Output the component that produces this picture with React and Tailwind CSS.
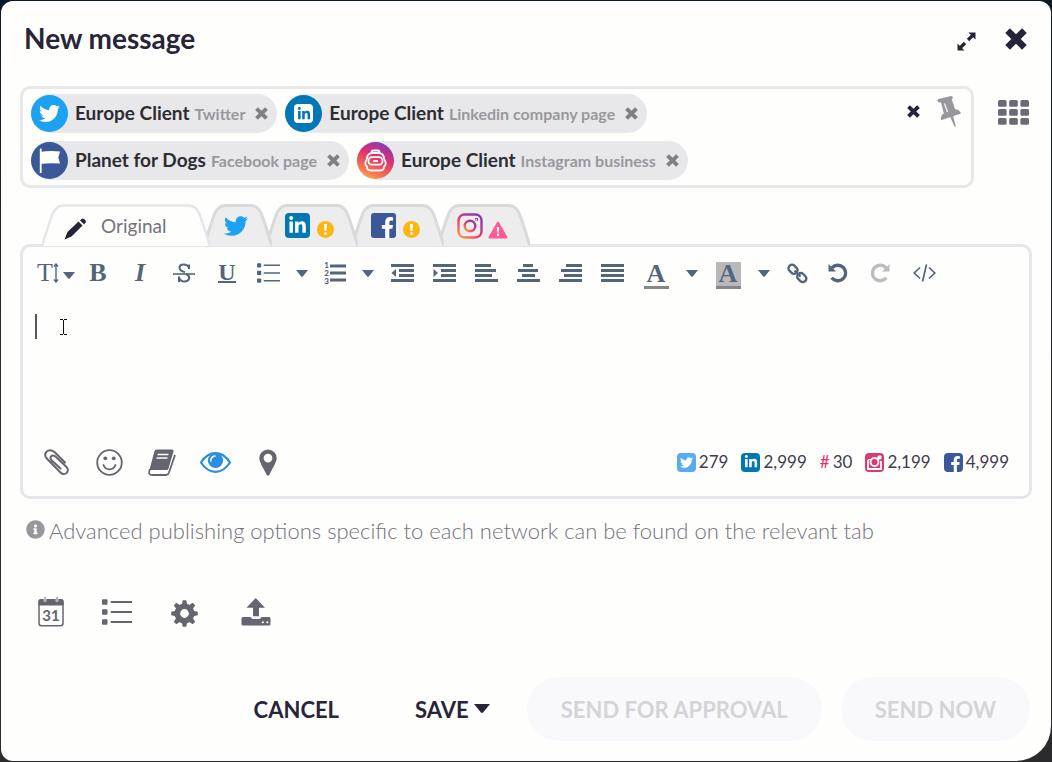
import React from 'react';
import clsx from 'clsx';
import { FaTwitter, FaLinkedinIn, FaFacebookF, FaInfoCircle } from 'react-icons/fa';

const accounts = [
  { id: 'tw', name: 'Europe Client', network: 'Twitter' },
  { id: 'li', name: 'Europe Client', network: 'Linkedin company page' },
  { id: 'fb', name: 'Planet for Dogs', network: 'Facebook page' },
  { id: 'ig', name: 'Europe Client', network: 'Instagram business' },
];

function Cross({ className }) {
  return (
    <svg viewBox="0 0 22 22" className={className} fill="none" stroke="currentColor" strokeWidth="6.6" aria-hidden="true">
      <path d="M2.6 2.6 19.4 19.4M19.4 2.6 2.6 19.4" />
    </svg>
  );
}

function CaretDown({ className }) {
  return (
    <svg viewBox="0 0 12 7" className={className} fill="currentColor" aria-hidden="true">
      <path d="M0 0H12L6.8 6.4Q6 7 5.2 6.4Z" />
    </svg>
  );
}

function AccountIcon({ id }) {
  if (id === 'tw') {
    return (
      <span className="flex size-[37px] items-center justify-center rounded-full bg-[#1da1f2] text-white">
        <FaTwitter size={21} />
      </span>
    );
  }
  if (id === 'li') {
    return (
      <span className="flex size-[37px] items-center justify-center rounded-full bg-[#0277b5]">
        <span className="flex size-[19px] items-center justify-center rounded-[4px] bg-white text-[#0277b5]">
          <FaLinkedinIn size={14} />
        </span>
      </span>
    );
  }
  if (id === 'fb') {
    return (
      <span className="flex size-[37px] items-center justify-center rounded-full bg-[#3b5998]">
        <svg viewBox="0 0 37 37" className="size-[37px]" aria-hidden="true">
          <path d="M9.7 6.5V31" stroke="#fff" strokeWidth="1.8" />
          <path d="M9 10Q18 8.500 29 9.500L27.300 15.500 29 21.500Q18 20.800 9 22Z" fill="#fff" />
        </svg>
      </span>
    );
  }
  return (
    <span className="flex size-[37px] items-center justify-center rounded-full bg-[linear-gradient(25deg,#fdb04e_5%,#f5704f_28%,#e0306e_58%,#8a3ab9_88%)]">
      <svg viewBox="0 0 37 37" className="size-[37px]" fill="none" stroke="#fff" strokeWidth="1.8" aria-hidden="true">
        <path d="M14.500 10.500Q14.500 8.500 16.500 8.500H20.500Q22.500 8.500 22.500 10.500" />
        <path d="M10 17Q10 11 16 11H21Q27 11 27 17" />
        <path d="M10 17C7.500 20 8 23.500 10 24.500V25Q10 28.500 14 28.500H23Q27 28.500 27 25V24.500C29 23.500 29.500 20 27 17" />
        <rect x="11.500" y="15.200" width="14" height="7.500" rx="3.500" />
        <path d="M16 19H21" />
      </svg>
    </span>
  );
}

function Chip({ account }) {
  return (
    <li className="flex h-[39px] items-center rounded-full bg-[#e8e8eb] pr-[9px]">
      <AccountIcon id={account.id} />
      <span className="ml-[7px] text-[19px] font-bold text-[#2d2d31]">{account.name}</span>
      <span className="ml-[5px] text-[16px] font-bold text-[#98989c]">{account.network}</span>
      <button type="button" aria-label={`Remove ${account.network}`} className="ml-[10px] text-[#808084]">
        <Cross className="size-[13px]" />
      </button>
    </li>
  );
}

function InstagramOutline() {
  return (
    <svg viewBox="0 0 26 26" className="size-[26px]" fill="none" stroke="url(#ig)" strokeWidth="2.4" aria-hidden="true">
      <defs>
        <linearGradient id="ig" x1="0" y1="1" x2="0.8" y2="0">
          <stop offset="0" stopColor="#fda34b" />
          <stop offset="0.5" stopColor="#e6356c" />
          <stop offset="1" stopColor="#8a3ab9" />
        </linearGradient>
      </defs>
      <rect x="1.500" y="1.500" width="23" height="23" rx="6" />
      <circle cx="13" cy="13" r="5.300" />
      <circle cx="19.500" cy="6.500" r="0.600" />
    </svg>
  );
}

function WarnDot() {
  return (
    <svg viewBox="0 0 17 17" className="size-[17px]" aria-hidden="true">
      <circle cx="8.500" cy="8.500" r="8.500" fill="#fdb515" />
      <path d="M7 3H10L9.500 10H7.500ZM7.300 11.300H9.700V13.700H7.300Z" fill="#fff" />
    </svg>
  );
}

function WarnTriangle() {
  return (
    <svg viewBox="0 0 20 18" className="h-[18px] w-[20px]" aria-hidden="true">
      <path d="M10 1.500 18.500 16.500H1.500Z" fill="#ff5a98" stroke="#ff5a98" strokeWidth="2" strokeLinejoin="round" />
      <path d="M8.800 6H11.200L10.800 11.500H9.200ZM9 12.800H11V15H9Z" fill="#fff" />
    </svg>
  );
}

function Tab({ width, label, active, className, children }) {
  const side = width - 21;
  const d = `M0 42L9 14Q13 1.500 21 1.500H${side}Q${side + 8} 1.500 ${width - 9} 14L${width} 42`;
  return (
    <button
      type="button"
      role="tab"
      aria-selected={!!active}
      aria-label={label}
      className={clsx('relative flex h-[43px] items-center', className)}
    >
      <svg
        viewBox={`0 0 ${width} 43`}
        className="absolute inset-0 size-full"
        preserveAspectRatio="none"
        fill={active ? '#fefefd' : '#ededee'}
        stroke={active ? '#e6e6ea' : '#dadadd'}
        strokeWidth={active ? 2.4 : 3}
        aria-hidden="true"
      >
        <path d={d} />
      </svg>
      <span className="relative flex items-end">{children}</span>
    </button>
  );
}

function Lines({ rows }) {
  return (
    <svg viewBox="0 0 23 18" className="h-[18px] w-[23px]" stroke="currentColor" strokeWidth="3" aria-hidden="true">
      {rows.map(([a, b], i) => (
        <path key={i} d={`M${a} ${1.5 + i * 5}H${b}`} />
      ))}
    </svg>
  );
}

function Tool({ label, className, disabled, children }) {
  return (
    <button
      type="button"
      aria-label={label}
      disabled={disabled}
      className={clsx('flex h-[30px] shrink-0 items-center justify-center', className)}
    >
      {children}
    </button>
  );
}

function BulletList({ className }) {
  return (
    <svg viewBox="0 0 30 26" className={className} stroke="currentColor" fill="currentColor" aria-hidden="true">
      <path d="M9.500 3H29.500M9.500 13H29.500M9.500 23H29.500" strokeWidth="2" strokeLinecap="round" />
      <g stroke="none">
        <rect width="5.500" height="5.500" y="0.200" rx="1" />
        <rect width="5.500" height="5.500" y="10.200" rx="1" />
        <rect width="5.500" height="5.500" y="20.200" rx="1" />
      </g>
    </svg>
  );
}

function RotateArrow({ className }) {
  return (
    <svg viewBox="0 0 20 20" className={className} aria-hidden="true">
      <path d="M4 4.800A7.800 7.800 0 1 1 3.700 14.800" fill="none" stroke="currentColor" strokeWidth="3.400" />
      <path d="M0.500 1V8.500H8Z" fill="currentColor" />
    </svg>
  );
}

function Toolbar() {
  return (
    <div role="toolbar" aria-label="Formatting" className="flex items-center pt-[11px] pl-3 font-['Liberation_Serif',serif] text-[26px] leading-[26px] font-bold text-[#53657a]">
      <Tool label="Font size" className="w-[42px]">
        <span className="font-normal">T</span>
        <svg viewBox="0 0 6 20" className="h-[20px] w-[6px]" fill="none" stroke="currentColor" strokeWidth="1.400" aria-hidden="true">
          <path d="M3 1V19M1 3.500 3 1 5 3.500M1 16.500 3 19 5 16.500" />
        </svg>
        <CaretDown className="mt-1 ml-1 w-[12px]" />
      </Tool>
      <Tool label="Bold" className="w-[42px]">B</Tool>
      <Tool label="Italic" className="w-[42px]"><i>I</i></Tool>
      <Tool label="Strikethrough" className="w-[46px]">
        <svg viewBox="0 0 22 20" className="h-[20px] w-[22px]" fill="none" stroke="currentColor" aria-hidden="true">
          <path d="M16 6V1.500M16 4.500C14 0.500 6.500 0.500 6.500 4.800 6.500 8 10 8.500 12 9.200M13 11C19 14 15.500 18.500 11.500 18.500 9 18.500 7 17 6.300 15M6 13.500V19" strokeWidth="2" />
          <path d="M0 11H22" strokeWidth="1.600" />
        </svg>
      </Tool>
      <Tool label="Underline" className="w-[40px]">
        <span className="h-[20px] border-b-2 border-current text-[24px] leading-[18px]">U</span>
      </Tool>
      <Tool label="Bullet list" className="w-[42px]"><BulletList className="h-[20px] w-[23px]" /></Tool>
      <Tool label="Bullet list styles" className="w-[26px]"><CaretDown className="w-[12px]" /></Tool>
      <Tool label="Numbered list" className="w-[40px]">
        <span className="flex flex-col font-['Lato',sans-serif] text-[8px] leading-[8px] font-black">
          <span>1</span>
          <span>2</span>
          <span>3</span>
        </span>
        <svg viewBox="0 0 17 18" className="h-[18px] w-[17px]" stroke="currentColor" strokeWidth="3" aria-hidden="true">
          <path d="M1 2H17M1 9H17M1 16H17" />
        </svg>
      </Tool>
      <Tool label="Numbered list styles" className="w-[26px]"><CaretDown className="w-[12px]" /></Tool>
      {['Outdent', 'Indent'].map((label) => (
        <Tool key={label} label={label} className="w-[42px]">
          <svg viewBox="0 0 23 18" className="h-[18px] w-[23px]" stroke="currentColor" strokeWidth="3" aria-hidden="true">
            <path d="M0 1.500H23M8 6.500H23M8 11.500H23M0 16.500H23" />
            <path d={label === 'Outdent' ? 'M5 5V13L0.500 9Z' : 'M0.500 5V13L5 9Z'} fill="currentColor" stroke="none" />
          </svg>
        </Tool>
      ))}
      <Tool label="Align left" className="w-[42px]"><Lines rows={[[0, 16], [0, 21], [0, 17], [0, 23]]} /></Tool>
      <Tool label="Align center" className="w-[42px]"><Lines rows={[[6, 16], [1, 21], [5, 18], [0, 23]]} /></Tool>
      <Tool label="Align right" className="w-[42px]"><Lines rows={[[7, 23], [2, 23], [5, 23], [0, 23]]} /></Tool>
      <Tool label="Justify" className="w-[42px]"><Lines rows={[[0, 23], [0, 23], [0, 23], [0, 23]]} /></Tool>
      <Tool label="Text colour" className="w-[46px]">
        <span className="mt-1 w-[25px] border-b-[3px] border-[#85858f] leading-[24px]">A</span>
      </Tool>
      <Tool label="Text colours" className="w-[26px]"><CaretDown className="w-[12px]" /></Tool>
      <Tool label="Highlight" className="w-[46px]">
        <span className="mt-1 w-[25px] border-b-[3px] border-[#85858f] bg-[#b9b9bc] leading-[24px]">A</span>
      </Tool>
      <Tool label="Highlight colours" className="w-[26px]"><CaretDown className="w-[12px]" /></Tool>
      <Tool label="Insert link" className="w-[40px]">
        <svg viewBox="0 0 21 21" className="size-[21px]" fill="none" stroke="currentColor" strokeWidth="2.400" aria-hidden="true">
          <rect x="-4.800" y="-3.500" width="9.600" height="7" rx="3.200" transform="translate(6 6.200) rotate(45)" />
          <rect x="-4.800" y="-3.500" width="9.600" height="7" rx="3.200" transform="translate(14.800 14.600) rotate(45)" />
          <path d="M7.500 7.500 13.500 13.500" />
        </svg>
      </Tool>
      <Tool label="Undo" className="w-[42px]"><RotateArrow className="size-[20px]" /></Tool>
      <Tool label="Redo" disabled className="w-[42px] text-[#bcbcc0]"><RotateArrow className="size-[20px] -scale-x-100" /></Tool>
      <Tool label="Source code" className="w-[46px]">
        <svg viewBox="0 0 23 18" className="h-[18px] w-[23px]" fill="none" stroke="currentColor" strokeWidth="1.700" aria-hidden="true">
          <path d="M7 3.500 1.200 9 7 14.500M16 3.500 21.800 9 16 14.500M13.500 0.500 9.500 17.500" />
        </svg>
      </Tool>
    </div>
  );
}

function CountBadge({ className, children }) {
  return <span className={clsx('flex size-[19px] justify-center rounded-[4px] text-white', className)}>{children}</span>;
}

function Counters() {
  return (
    <ul className="flex items-center gap-[13px] text-[17px] text-[#3f3d4c]">
      <li className="flex items-center gap-[3px]">
        <CountBadge className="items-center bg-[#55acee]"><FaTwitter size={13} /></CountBadge>279
      </li>
      <li className="flex items-center gap-[3px]">
        <CountBadge className="items-center bg-[#0277b5]"><FaLinkedinIn size={14} /></CountBadge>2,999
      </li>
      <li className="flex items-center gap-[3px]"><span className="text-[#e0336a]">#</span>30</li>
      <li className="flex items-center gap-[3px]">
        <CountBadge className="items-center bg-[#dc3a6c]">
          <svg viewBox="0 0 19 19" className="size-[19px]" fill="none" stroke="#fff" strokeWidth="1.800" aria-hidden="true">
            <path d="M3 7V16H16V8" />
            <circle cx="9.500" cy="9" r="4" />
            <path d="M3 6.500H6.500M13 3H16V6H13Z" strokeWidth="1" fill="#fff" />
          </svg>
        </CountBadge>
        2,199
      </li>
      <li className="flex items-center gap-[3px]">
        <CountBadge className="items-end bg-[#3b5998] pl-1"><FaFacebookF size={16} /></CountBadge>4,999
      </li>
    </ul>
  );
}

function AttachBar() {
  return (
    <div className="flex flex-wrap items-center justify-between pr-[20px] pb-[18px] pl-[21px]">
      <div className="flex h-[32px] items-center text-[#65656f]">
        <button type="button" aria-label="Attach file" className="w-[52px]">
          <svg viewBox="0 0 25 27" className="h-[27px] w-[25px]" fill="none" stroke="currentColor" strokeWidth="2" strokeLinecap="round" aria-hidden="true">
            <path d="M21 13.500 10.500 3C4.500-1.500-1.500 4 2.800 9.500L16.500 23.500C21 28 26.500 22 22.300 17.800L11.500 7.500C8 5 5 8 7.500 11.200L16.500 19.500" />
          </svg>
        </button>
        <button type="button" aria-label="Emoji" className="w-[52px]">
          <svg viewBox="0 0 27 27" className="size-[27px]" fill="none" stroke="currentColor" strokeWidth="1.800" aria-hidden="true">
            <circle cx="13.500" cy="13.500" r="12.300" />
            <path d="M7.500 16Q9 20.300 13.500 20.300T19.500 16" strokeLinecap="round" />
            <circle cx="9.300" cy="9.300" r="1.900" fill="currentColor" stroke="none" />
            <circle cx="17.700" cy="9.300" r="1.900" fill="currentColor" stroke="none" />
          </svg>
        </button>
        <button type="button" aria-label="Library" className="w-[52px]">
          <svg viewBox="0 0 28 27" className="h-[27px] w-[28px]" aria-hidden="true">
            <path d="M8.500 0.500H24Q26 0.500 25.500 2.500L20.500 19.500Q20 21 18.500 21H2.500Q1.500 21 1.800 19.500L6.500 2Q7 0.500 8.500 0.500Z" fill="currentColor" />
            <path d="M9.500 5.500H20.500M8.500 9H19.500" stroke="#fefefd" strokeWidth="1.600" />
            <path d="M2 20Q-0.500 26 4 26H18Q20 26 21 23.500L27 6" fill="none" stroke="currentColor" strokeWidth="1.800" />
          </svg>
        </button>
        <button type="button" aria-label="Preview" className="w-[59px] text-[#2a8ee0]">
          <svg viewBox="0 0 31 21" className="h-[21px] w-[31px]" fill="none" aria-hidden="true">
            <path d="M1 10.500Q7 1.200 15.500 1.200T30 10.500Q24 19.800 15.500 19.800T1 10.500Z" stroke="currentColor" strokeWidth="2.200" />
            <circle cx="15.500" cy="8.500" r="7.600" fill="currentColor" />
            <path d="M10.800 9Q10.800 4.500 15 4" stroke="#fff" strokeWidth="1.500" strokeLinecap="round" />
          </svg>
        </button>
        <button type="button" aria-label="Location">
          <svg viewBox="0 0 18 27" className="h-[27px] w-[18px]" fill="currentColor" fillRule="evenodd" aria-hidden="true">
            <path d="M9 0.500A8.700 8.700 0 0 1 17.700 9.200C17.700 13 12.500 21 10.500 25.500Q9 28 7.500 25.500C5.500 21 0.300 13 0.300 9.200A8.700 8.700 0 0 1 9 0.500ZM9 4.700A4.400 4.400 0 1 0 9 13.500 4.400 4.400 0 1 0 9 4.700Z" />
          </svg>
        </button>
      </div>
      <Counters />
    </div>
  );
}

function OptionsBar() {
  return (
    <div className="mt-[52px] flex items-center pl-[18px] text-[#65656f]">
      <button type="button" aria-label="Schedule" className="w-[64px]">
        <svg viewBox="0 0 26 30" className="h-[30px] w-[26px]" aria-hidden="true">
          <rect x="1" y="3" width="24" height="25.800" rx="2.500" fill="none" stroke="currentColor" strokeWidth="1.500" />
          <path d="M0.500 8.500V4Q0.500 2 2.500 2H23.500Q25.500 2 25.500 4V8.500Z" fill="currentColor" />
          <path d="M7 0V4.500M19 0V4.500" stroke="#fefefd" strokeWidth="2.600" />
          <path d="M7 0V4M19 0V4" stroke="currentColor" strokeWidth="1" />
          <text x="13" y="23.500" textAnchor="middle" fill="currentColor" fontFamily="Lato, sans-serif" fontWeight="700" fontSize="15">31</text>
        </svg>
      </button>
      <button type="button" aria-label="Lists" className="w-[69px]"><BulletList className="h-[26px] w-[30px]" /></button>
      <button type="button" aria-label="Settings" className="w-[70px]">
        <svg viewBox="0 0 27 27" className="mt-[2px] size-[27px]" aria-hidden="true">
          <circle cx="13.500" cy="13.500" r="7.200" fill="none" stroke="currentColor" strokeWidth="5.600" />
          {[0, 45, 90, 135].map((deg) => (
            <path key={deg} d="M10.800 5 11.700 0.200H15.300L16.200 5ZM10.800 22 11.700 26.800H15.300L16.200 22Z" fill="currentColor" transform={`rotate(${deg} 13.500 13.500)`} />
          ))}
        </svg>
      </button>
      <button type="button" aria-label="Upload">
        <svg viewBox="0 0 30 28" className="h-[28px] w-[30px]" fill="currentColor" aria-hidden="true">
          <path d="M14.700 0 24 9.800H18V18.300H12V9.800H5.500Z" />
          <path d="M2 19H9.500Q10.500 21 12 21H18Q19.500 21 20.500 19H28Q29.500 19 29.500 20.500V26Q29.500 27.500 28 27.500H2Q0.500 27.500 0.500 26V20.500Q0.500 19 2 19Z" />
          <circle cx="21.800" cy="24.300" r="1.100" fill="#fefefd" />
          <circle cx="26.300" cy="24.300" r="1.100" fill="#fefefd" />
        </svg>
      </button>
    </div>
  );
}

export default function App() {
  return (
    <div className="flex min-h-screen bg-linear-to-b from-[#0c1a26] to-[#2b2b2e] to-50% p-px font-['Lato',sans-serif]">
      <main className="flex flex-1 flex-col rounded-[12px] rounded-br-[35px] bg-[#fefefd] px-[19px] pb-5">
        <header className="flex h-[85px] items-start justify-between pt-[21px] pr-[5px] pl-1 text-[#25233a]">
          <h1 className="text-[28px] leading-[32px] font-bold text-[#272536]">New message</h1>
          <div className="flex h-[34px] items-center gap-[29px]">
            <button type="button" aria-label="Expand" className="mt-1">
              <svg viewBox="0 0 19 19" className="size-[19px]" fill="currentColor" aria-hidden="true">
                <path d="M11.500 0.500H18.500V7.500ZM0.500 11.500V18.500H7.500Z" />
                <path d="M16 3 11 8M8 11 3 16" stroke="currentColor" strokeWidth="3.200" />
              </svg>
            </button>
            <button type="button" aria-label="Close"><Cross className="size-[22px]" /></button>
          </div>
        </header>

        <section aria-label="Recipients" className="flex items-start">
          <div className="flex flex-1 items-start justify-between rounded-[10px] border-[3px] border-[#e8e8eb] p-[5px] pr-[9px] pl-2">
            <ul className="flex flex-1 flex-wrap gap-2">
              {accounts.map((a) => (
                <Chip key={a.id} account={a} />
              ))}
            </ul>
            <div className="flex items-center gap-[17px] pt-[2px]">
              <button type="button" aria-label="Clear all" className="text-[#25233a]"><Cross className="size-[13px]" /></button>
              <button type="button" aria-label="Pin" className="text-[#98989c]">
                <svg viewBox="0 0 25 31" className="h-[31px] w-[25px]" fill="currentColor" aria-hidden="true">
                  <path d="M0.500 5Q0 3.500 1.500 3L14 0Q15.500 0 15.700 1.200 16 2.500 14.800 3.200L18 13.200Q23 13.800 24 17.500L4 24.300Q3 20 6.800 17.300L4 6.500Q1 7 0.500 5Z" />
                  <path d="M13 20.500 17.500 30.700 18.800 30.500 16 19.500Z" />
                  <path d="M7.500 7.500 10.500 16" stroke="#fefefd" strokeWidth="1.200" />
                </svg>
              </button>
            </div>
          </div>
          <button type="button" aria-label="Choose accounts" className="mt-[14px] mr-[3px] ml-6 text-[#6b6b77]">
            <svg viewBox="0 0 31 25" className="h-[25px] w-[31px]" fill="currentColor" aria-hidden="true">
              {[0, 9, 18].map((y) => [0, 11.2, 22.4].map((x) => <rect key={`${x}-${y}`} x={x} y={y} width="8.600" height="6.800" rx="1.500" />))}
            </svg>
          </button>
        </section>

        <div role="tablist" className="relative z-10 mt-4 -mb-[3px] flex pl-[22px]">
          <Tab width={168} label="Original" active className="z-50 w-[168px] pl-[22px]">
            <svg viewBox="0 0 23 22" className="mr-[14px] h-[22px] w-[23px] text-[#25233a]" fill="currentColor" aria-hidden="true">
              <path d="M0.500 21.500 3.500 14 14.500 3.500 18.500 7.500 7.500 18.500ZM16 2.500 18 0.700Q19 0 20 1L21.500 2.500Q22.500 3.700 21.700 4.500L20 6.300Z" />
            </svg>
            <span className="text-[19px] leading-[28px] text-[#74747c]">Original</span>
          </Tab>
          <Tab width={68} label="Twitter" className="z-40 -ml-[6px] w-[68px] pl-5">
            <FaTwitter size={24} className="text-[#1da1f2]" />
          </Tab>
          <Tab width={92} label="LinkedIn" className="z-30 -ml-[6px] w-[92px] pl-[19px]">
            <span className="mr-[7px] flex size-[25px] items-center justify-center rounded-[4px] bg-[#0277b5] text-white"><FaLinkedinIn size={19} /></span>
            <WarnDot />
          </Tab>
          <Tab width={92} label="Facebook" className="z-20 -ml-[6px] w-[92px] pl-[19px]">
            <span className="mr-[7px] flex size-[25px] items-end justify-center rounded-[3px] bg-[#3b5998] pl-2 text-white"><FaFacebookF size={21} /></span>
            <WarnDot />
          </Tab>
          <Tab width={92} label="Instagram" className="z-10 -ml-[6px] w-[92px] pl-[19px]">
            <span className="mr-[5px]"><InstagramOutline /></span>
            <WarnTriangle />
          </Tab>
        </div>

        <section aria-label="Message" className="rounded-[10px] border-[3px] border-[#e6e6ea]">
          <Toolbar />
          <div className="relative">
            <textarea aria-label="Message text" rows={5} className="block h-[158px] w-full resize-none bg-transparent px-3 py-6 text-[20px] text-[#2d2d31] outline-none" />
            <span className="absolute top-[26px] left-3 h-[25px] w-[2px] bg-[#55555c]" />
            <svg viewBox="0 0 7 16" className="absolute top-[31px] left-[37px] h-[16px] w-[7px]" fill="none" stroke="#111" strokeWidth="1" aria-hidden="true">
              <path d="M0 0.500H3M4 0.500H7M3.500 1V15M0 15.500H3M4 15.500H7" />
            </svg>
          </div>
          <AttachBar />
        </section>

        <p className="mt-[18px] flex items-center gap-1 pl-[6px] text-[22px] leading-[28px] font-light text-[#727278]">
          <FaInfoCircle size={19} className="mb-1 shrink-0 text-[#98989c]" />
          Advanced publishing options specific to each network can be found on the relevant tab
        </p>

        <OptionsBar />

        <footer className="mt-auto flex items-center justify-end pr-[2px] text-[22px] font-bold text-[#272536]">
          <button type="button">CANCEL</button>
          <button type="button" className="mr-[37px] ml-[76px] flex items-center gap-[5px]">
            SAVE
            <CaretDown className="w-[16px]" />
          </button>
          <button type="button" disabled className="h-[64px] rounded-full bg-[#f9f9fc] px-[34px] text-[#d4d4d7]">SEND FOR APPROVAL</button>
          <button type="button" disabled className="ml-[19px] h-[64px] rounded-full bg-[#f9f9fc] px-[34px] text-[#d4d4d7]">SEND NOW</button>
        </footer>
      </main>
    </div>
  );
}
